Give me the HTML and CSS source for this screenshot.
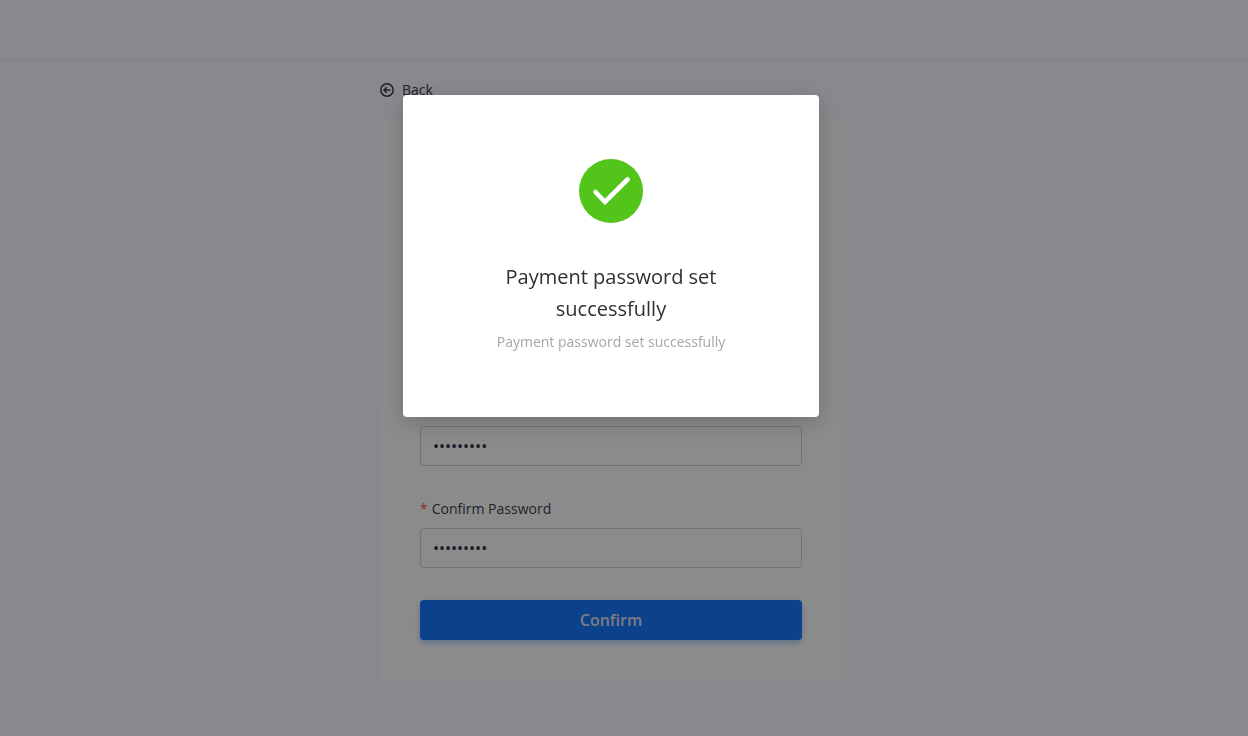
FILE: index.html
```html
<!DOCTYPE html>
<html lang="en">
<head>
  <meta charset="UTF-8" />
  <meta name="viewport" content="width=device-width, initial-scale=1" />
  <title>Payment password</title>
  <link rel="stylesheet" href="styles.css">
</head>
<body>
  <header class="topbar"></header>

  <main class="page">
    <a class="back" href="#">
      <svg class="back-icon" viewBox="0 0 14 14" fill="none" stroke="currentColor" stroke-width="1.5" aria-hidden="true">
        <circle cx="7" cy="7" r="6.2" />
        <path d="M10.5 7H4M6.8 4.2L4 7l2.8 2.8" />
      </svg>
      <span>Back</span>
    </a>

    <form class="card">
      <div class="field">
        <input class="input" type="password" value="123456789" aria-label="Password" required>
      </div>
      <div class="field">
        <label class="label" for="confirm-password"><span class="required">*</span>Confirm Password</label>
        <input class="input" id="confirm-password" type="password" value="123456789" required>
      </div>
      <button class="submit" type="button">Confirm</button>
    </form>
  </main>

  <!-- Success dialog -->
  <div class="overlay">
    <div class="modal" role="dialog" aria-modal="true" aria-labelledby="modal-title">
      <svg class="modal-icon" viewBox="0 0 64 64" aria-hidden="true">
        <circle cx="32" cy="32" r="32" fill="#52c41a" />
        <path d="M16.5 33L26 43L48.5 20.5" fill="none" stroke="#fff" stroke-width="4.6" stroke-linecap="round" stroke-linejoin="miter" />
      </svg>
      <h2 class="modal-title" id="modal-title">Payment password set successfully</h2>
      <p class="modal-text">Payment password set successfully</p>
    </div>
  </div>
</body>
</html>
```

FILE: styles.css
```css
* {
  box-sizing: border-box;
}

body {
  margin: 0;
  min-height: 100vh;
  background-color: #f8f9ff;
  font-family: "Open Sans", "Noto Sans", sans-serif;
  font-size: 14px;
  line-height: 22px;
  color: #3a3e4a;
}

.topbar {
  height: 59px;
  background-color: #f8f9ff;
  box-shadow: 0 1px 4px rgba(0, 21, 41, 0.08);
}

.page {
  padding: 20px 26px 48px 0;
  display: flex;
  flex-direction: column;
  align-items: center;
}

.back,
.card {
  width: 100%;
  max-width: 462px;
}

.back {
  display: flex;
  align-items: center;
  gap: 8px;
  margin-bottom: 16px;
  color: inherit;
  text-decoration: none;
}

.back-icon {
  width: 14px;
  height: 14px;
}

.card {
  min-height: 563px;
  padding: 40px;
  display: flex;
  flex-direction: column;
  justify-content: flex-end;
  gap: 32px;
  background-color: #fefefe;
  box-shadow: 0 0 0 1px #f3f4fc;
  border-radius: 2px;
}

.field {
  display: flex;
  flex-direction: column;
  gap: 8px;
}

.required {
  margin-right: 4px;
  color: #ff4d4f;
}

.input {
  width: 100%;
  height: 40px;
  padding: 0 12px;
  border: 1px solid #d0d0d0;
  border-radius: 4px;
  background-color: transparent;
  font-family: inherit;
  font-size: 16px;
  color: #2c303c;
}

.submit {
  height: 40px;
  border: none;
  border-radius: 4px;
  background-color: #1677ff;
  box-shadow: 0 3px 6px rgba(22, 119, 255, 0.35);
  color: #e0e4f0;
  font-family: inherit;
  font-size: 16px;
  font-weight: 600;
  cursor: pointer;
}

.overlay {
  position: fixed;
  inset: 0;
  padding: 95px 26px 0 0;
  display: flex;
  justify-content: center;
  align-items: flex-start;
  background-color: rgba(0, 0, 0, 0.45);
}

.modal {
  width: 100%;
  max-width: 416px;
  padding: 64px;
  display: flex;
  flex-direction: column;
  align-items: center;
  background-color: #fff;
  border-radius: 4px;
  box-shadow: 0 6px 24px rgba(0, 0, 0, 0.2);
  text-align: center;
}

.modal-icon {
  width: 64px;
  height: 64px;
  margin-bottom: 38px;
}

.modal-title {
  margin: 0 0 6px;
  font-size: 20px;
  font-weight: 400;
  line-height: 32px;
  color: #303030;
}

.modal-text {
  margin: 0;
  color: #a6a6a6;
}
```
